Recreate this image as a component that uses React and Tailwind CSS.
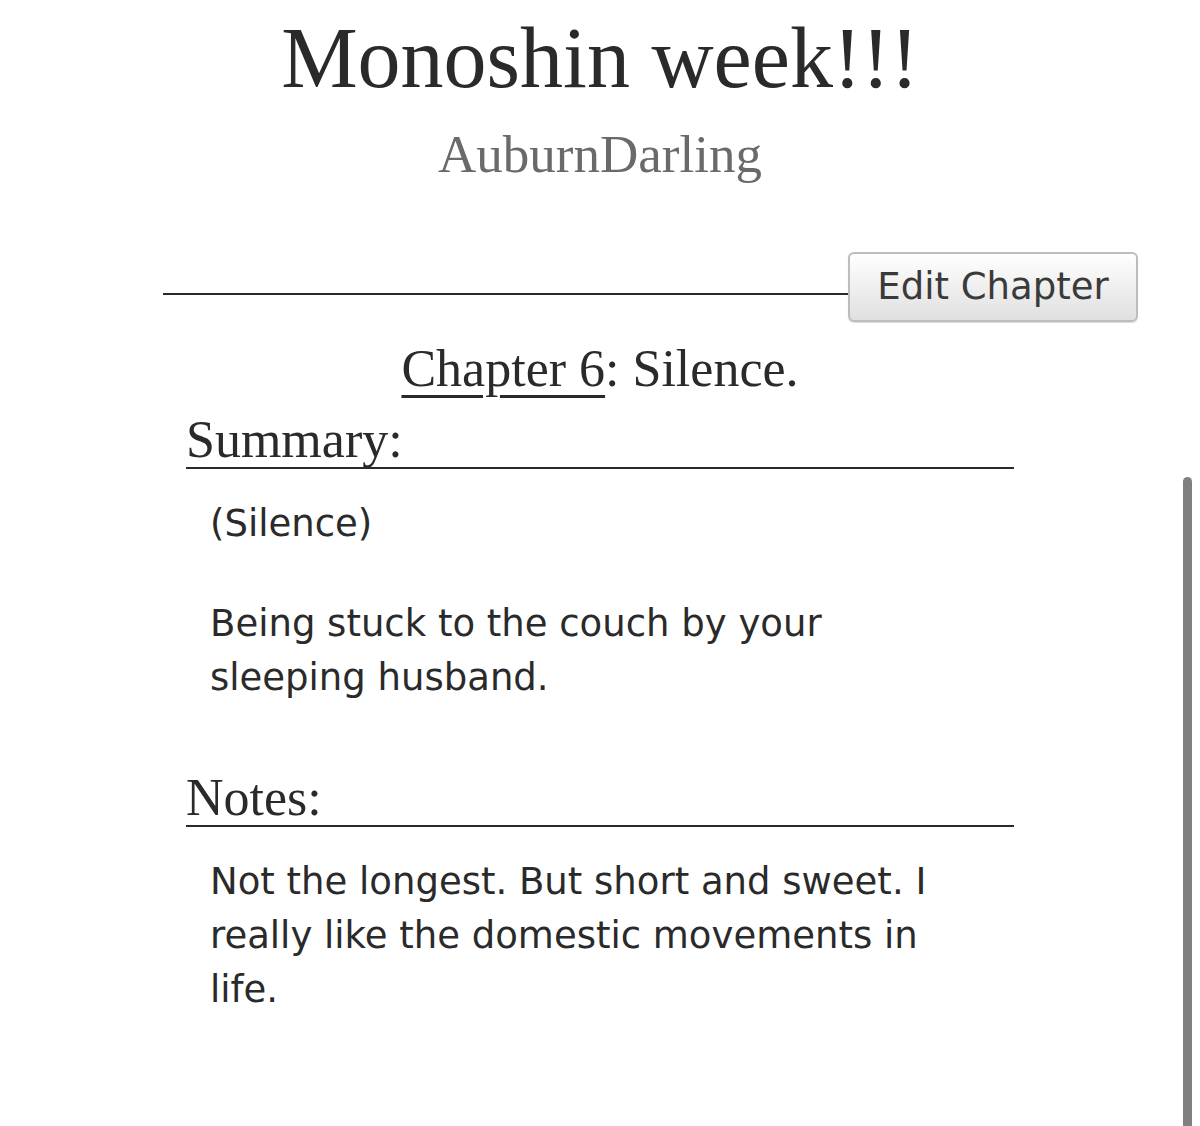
import React from 'react'

const serif = "font-['Liberation_Serif',Georgia,serif]"
const sans = "font-['DejaVu_Sans',Verdana,sans-serif]"

function Section({ title, children }) {
    return (
        <div className="mx-auto w-[828px]">
            <h3 className={`${serif} text-[52px] leading-[54px] text-[#2a2a2a] border-b-2 border-[#2a2a2a] pt-[2px]`}>
                {title}
            </h3>
            <div className={`${sans} text-[37px] leading-[54px] text-[#2a2a2a] pl-6 pr-[64px] pt-[28px]`}>
                {children}
            </div>
        </div>
    )
}

export default function App() {
    return (
        <div className="relative min-h-[1126px] bg-white overflow-hidden">
            <div className="pt-[12px] text-center">
                <h2 className={`${serif} text-[86px] leading-[92px] text-[#2a2a2a]`}>Monoshin week!!!</h2>
                <h3 className={`${serif} text-[53px] leading-[60px] text-[#6a6a6a] mt-[20px]`}>AuburnDarling</h3>
            </div>

            <div className="flex items-start pl-[163px] mt-[68px]">
                <div className="flex-1 h-[2px] mt-[41px] bg-[#2a2a2a]" />
                <button
                    className={`${sans} w-[290px] h-[70px] mr-[62px] rounded-[6px] border-2 border-[#bdbdbd] bg-gradient-to-b from-white to-[#e0e0e0] text-[37px] text-[#3a3a3a] shadow-[0_1px_1px_rgba(0,0,0,0.15)]`}
                >
                    Edit Chapter
                </button>
            </div>

            <h3 className={`${serif} text-center text-[52px] leading-[60px] text-[#2a2a2a] mt-[17px]`}>
                <span className="underline decoration-[3px] underline-offset-[9px]">Chapter 6</span>: Silence.
            </h3>

            <div className="mt-[12px]">
                <Section title="Summary:">
                    <p>(Silence)</p>
                    <p className="mt-[46px]">Being stuck to the couch by your sleeping husband.</p>
                </Section>
            </div>

            <div className="mt-[64px]">
                <Section title="Notes:">
                    <p>Not the longest. But short and sweet. I really like the domestic movements in life.</p>
                </Section>
            </div>

            {/* scroll indicator */}
            <div className="absolute right-[8px] top-[477px] w-[9px] h-[660px] rounded-full bg-[#808080]" />
        </div>
    )
}
